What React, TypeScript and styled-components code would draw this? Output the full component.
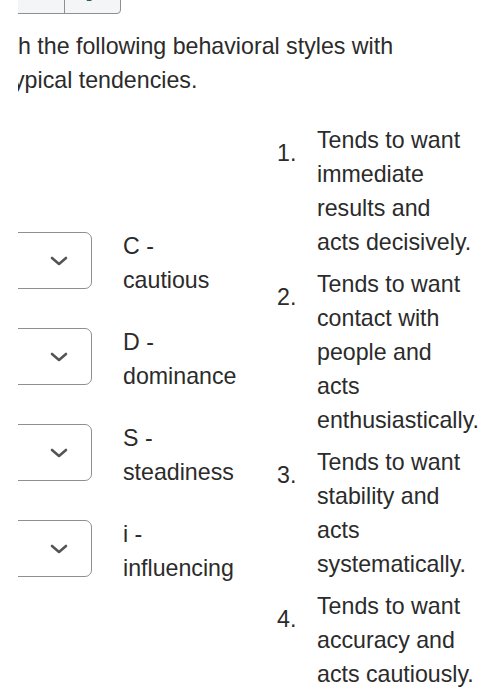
import React from 'react';
import styled, { createGlobalStyle } from 'styled-components';

const TEXT = '#2b2b2b';
const BORDER = '#8f8f8f';
const FONT_SIZE = '23.2px';

const GlobalStyle = createGlobalStyle`
  html, body {
    margin: 0;
    padding: 0;
    background: #ffffff;
  }
  body {
    font-family: 'Liberation Sans', Arial, sans-serif;
    color: ${TEXT};
  }
`;

const Viewport = styled.div`
  margin-left: 18px;
  overflow: hidden;
  height: 700px;
`;

const ButtonGroup = styled.div`
  display: flex;
  margin-top: -31px;
  margin-left: -1px;
  height: 43px;
  width: 102px;
  border: 1px solid ${BORDER};
  border-radius: 0 0 4px 0;
  background: #f3f5f7;
`;

const GroupButton = styled.div<{ width: number; divider?: boolean }>`
  width: ${({ width }) => width}px;
  position: relative;
  ${({ divider }) => divider && `border-left: 1px solid ${BORDER};`}
`;

const Prompt = styled.p`
  margin: 15px 0 0;
  font-size: ${FONT_SIZE};
  line-height: 34px;
  white-space: nowrap;
`;

const Cut = styled.span`
  display: inline-block;
  margin-left: -5px;
`;

const Matching = styled.div`
  display: flex;
  align-items: flex-start;
  margin-top: 26px;
`;

const ChoiceColumn = styled.div`
  display: flex;
  flex-direction: column;
  gap: 28px;
  padding-top: 106px;
`;

const ChoiceRow = styled.div`
  display: flex;
  align-items: flex-start;
`;

const SelectBox = styled.div`
  margin-top: 3px;
  margin-left: -10px;
  width: 84px;
  height: 57px;
  box-sizing: border-box;
  border: 1.5px solid ${BORDER};
  border-radius: 7px;
  display: flex;
  align-items: center;
  justify-content: flex-end;
  padding-right: 23px;
  background: #fff;
`;

const Label = styled.div`
  margin-left: 31px;
  width: 118px;
  font-size: ${FONT_SIZE};
  line-height: 34px;
`;

const Tendencies = styled.ol`
  list-style: none;
  margin: 0 0 0 36px;
  padding: 0;
  display: flex;
  flex-direction: column;
  gap: 8px;
`;

const Tendency = styled.li`
  display: flex;
  font-size: ${FONT_SIZE};
  line-height: 34px;
`;

const Number = styled.span`
  width: 40px;
  flex-shrink: 0;
  padding-top: 13px;
`;

const TendencyText = styled.span`
  width: 158px;
`;

const Chevron = () => (
  <svg width="18" height="10" viewBox="0 0 18 10">
    <polyline
      points="2,2 9,8 16,2"
      fill="none"
      stroke="#555"
      strokeWidth="2.6"
      strokeLinecap="round"
      strokeLinejoin="round"
    />
  </svg>
);

const choices = [
  ['C -', 'cautious'],
  ['D -', 'dominance'],
  ['S -', 'steadiness'],
  ['i -', 'influencing'],
];

const tendencies = [
  'Tends to want immediate results and acts decisively.',
  'Tends to want contact with people and acts enthusiastically.',
  'Tends to want stability and acts systematically.',
  'Tends to want accuracy and acts cautiously.',
];

const App: React.FC = () => (
  <>
    <GlobalStyle />
    <Viewport>
      <ButtonGroup>
        <GroupButton width={46} />
        <GroupButton width={56} divider>
          <svg width="14" height="20" viewBox="0 0 14 20" style={{ position: 'absolute', left: 18, top: 22 }}>
            <polygon points="0,0 9,9 4,9" fill="#2a6548" />
          </svg>
        </GroupButton>
      </ButtonGroup>
      <Prompt>
        h the following behavioral styles with
        <br />
        <Cut>ypical tendencies.</Cut>
      </Prompt>
      <Matching>
        <ChoiceColumn>
          {choices.map(([letter, name]) => (
            <ChoiceRow key={letter}>
              <SelectBox>
                <Chevron />
              </SelectBox>
              <Label>
                {letter} {name}
              </Label>
            </ChoiceRow>
          ))}
        </ChoiceColumn>
        <Tendencies>
          {tendencies.map((text, i) => (
            <Tendency key={i}>
              <Number>{i + 1}.</Number>
              <TendencyText>{text}</TendencyText>
            </Tendency>
          ))}
        </Tendencies>
      </Matching>
    </Viewport>
  </>
);

export default App;
